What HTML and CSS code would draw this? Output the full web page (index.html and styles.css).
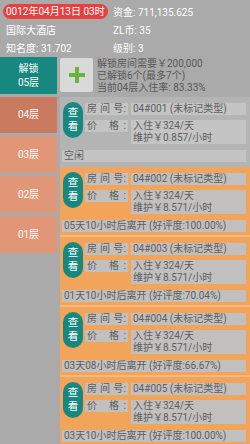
FILE: index.html
```html
<!DOCTYPE html>
<html lang="zh">
<head>
<meta charset="utf-8">
<link rel="stylesheet" href="styles.css">
</head>
<body>
<div class="screen">
  <div class="header">
    <div class="cell first"><span class="date">0012年04月13日 03时</span></div>
    <div class="cell">资金: 711,135.625</div>
    <div class="cell first">国际大酒店</div>
    <div class="cell">ZL币: 35</div>
    <div class="cell first">知名度: 31.702</div>
    <div class="cell">级别: 3</div>
  </div>
  <div class="main">
    <div class="floors">
      <div class="floor unlock">解锁<br>05层</div>
      <div class="floor current">04层</div>
      <div class="floor">03层</div>
      <div class="floor">02层</div>
      <div class="floor">01层</div>
    </div>
    <div class="content">
      <div class="unlock-row">
        <div class="plus-btn">
          <svg width="16" height="16" viewBox="0 0 16 16"><rect x="6" y="0" width="4" height="16" fill="#6cb33f"/><rect x="0" y="6" width="16" height="4" fill="#6cb33f"/></svg>
        </div>
        <div class="unlock-info">
          <div>解锁房间需要￥200,000</div>
          <div>已解锁6个(最多7个)</div>
          <div>当前04层入住率: 83.33%</div>
        </div>
      </div>
      <div class="room idle">
        <div class="room-top">
          <div class="view-btn"><span>查</span><span>看</span></div>
          <div class="fields">
            <div class="label">房 间 号:</div><div class="value">04#001 (未标记类型)</div>
            <div class="label">价 格:</div><div class="value">入住￥324/天<br>维护￥0.857/小时</div>
          </div>
        </div>
        <div class="status">空闲</div>
      </div>
      <div class="room">
        <div class="room-top">
          <div class="view-btn"><span>查</span><span>看</span></div>
          <div class="fields">
            <div class="label">房 间 号:</div><div class="value">04#002 (未标记类型)</div>
            <div class="label">价 格:</div><div class="value">入住￥324/天<br>维护￥8.571/小时</div>
          </div>
        </div>
        <div class="status">05天10小时后离开 (好评度:100.00%)</div>
      </div>
      <div class="room">
        <div class="room-top">
          <div class="view-btn"><span>查</span><span>看</span></div>
          <div class="fields">
            <div class="label">房 间 号:</div><div class="value">04#003 (未标记类型)</div>
            <div class="label">价 格:</div><div class="value">入住￥324/天<br>维护￥8.571/小时</div>
          </div>
        </div>
        <div class="status">01天10小时后离开 (好评度:70.04%)</div>
      </div>
      <div class="room">
        <div class="room-top">
          <div class="view-btn"><span>查</span><span>看</span></div>
          <div class="fields">
            <div class="label">房 间 号:</div><div class="value">04#004 (未标记类型)</div>
            <div class="label">价 格:</div><div class="value">入住￥324/天<br>维护￥8.571/小时</div>
          </div>
        </div>
        <div class="status">03天08小时后离开 (好评度:66.67%)</div>
      </div>
      <div class="room">
        <div class="room-top">
          <div class="view-btn"><span>查</span><span>看</span></div>
          <div class="fields">
            <div class="label">房 间 号:</div><div class="value">04#005 (未标记类型)</div>
            <div class="label">价 格:</div><div class="value">入住￥324/天<br>维护￥8.571/小时</div>
          </div>
        </div>
        <div class="status">03天10小时后离开 (好评度:100.00%)</div>
      </div>
    </div>
  </div>
</div>
</body>
</html>
```

FILE: styles.css
```css
html, body {
  margin: 0;
  padding: 0;
  background: #aaaaaa;
}
body {
  width: 250px;
  height: 444px;
  overflow: hidden;
  font-family: Roboto, "Noto Sans CJK SC", sans-serif;
  font-size: 10px;
}
.screen {
  width: 250px;
  height: 444px;
  overflow: hidden;
  background: #aaaaaa;
}
.header {
  display: grid;
  grid-template-columns: 110px 1fr;
  grid-auto-rows: 18px;
  padding: 2px 0 1px;
  color: #ffffff;
}
.cell {
  display: flex;
  align-items: center;
  padding-left: 3px;
  white-space: nowrap;
}
.cell.first {
  padding-left: 6px;
}
.cell.first:first-child {
  padding-left: 3px;
}
.date {
  display: inline-block;
  background: #e8403f;
  color: #ffffff;
  border-radius: 8px;
  padding: 0 3px;
  height: 15px;
  line-height: 15px;
  font-size: 10px;
}
.main {
  display: flex;
  align-items: flex-start;
}
.floors {
  width: 57px;
  display: flex;
  flex-direction: column;
  gap: 3px;
  flex-shrink: 0;
}
.floor {
  height: 37px;
  background: #e09677;
  color: #ffffff;
  display: flex;
  align-items: center;
  justify-content: center;
  text-align: center;
  line-height: 14px;
  font-size: 10px;
}
.floor.unlock {
  background: #178880;
  height: 37px;
}
.floor.current {
  background: #c97a5f;
  height: 36px;
}
.content {
  flex: 1;
  margin-left: 3px;
  min-width: 0;
}
.unlock-row {
  display: flex;
  height: 40px;
  padding-top: 1px;
  box-sizing: border-box;
}
.plus-btn {
  width: 33px;
  height: 34px;
  background: #d9d9d9;
  display: flex;
  align-items: center;
  justify-content: center;
  border-radius: 2px;
  flex-shrink: 0;
}
.unlock-info {
  margin-left: 4px;
  color: #585858;
  line-height: 12px;
  white-space: nowrap;
}
.room {
  height: 70px;
  box-sizing: border-box;
  background: #f3a45b;
  padding: 6px 4px 3px 2px;
  border-bottom: 2px solid #f6b87c;
}
.room.idle {
  background: #b4b4b4;
  border-bottom-color: #b4b4b4;
}
.room-top {
  display: flex;
  align-items: flex-start;
}
.view-btn {
  width: 20px;
  height: 36px;
  margin-left: 1px;
  margin-top: -1px;
  border-radius: 10px;
  background: #178880;
  color: #ffffff;
  display: flex;
  flex-direction: column;
  align-items: center;
  justify-content: center;
  font-size: 10.5px;
  line-height: 14px;
  flex-shrink: 0;
}
.fields {
  flex: 1;
  margin-left: 2px;
  display: grid;
  grid-template-columns: 43px 1fr;
  column-gap: 3px;
  row-gap: 5px;
  min-width: 0;
}
.label, .value, .status {
  background: #c2c0bf;
  color: #5e5e5e;
  white-space: nowrap;
}
.idle .label, .idle .value, .idle .status {
  background: #c4c4c4;
}
.label {
  align-self: start;
  height: 12px;
  line-height: 12px;
  padding: 0 2px;
  text-align: justify;
  text-align-last: justify;
  white-space: normal;
}
.value {
  line-height: 12px;
  padding: 0 2px;
}
.status {
  margin-top: 6px;
  height: 12px;
  line-height: 12px;
  padding-left: 2px;
}
```
